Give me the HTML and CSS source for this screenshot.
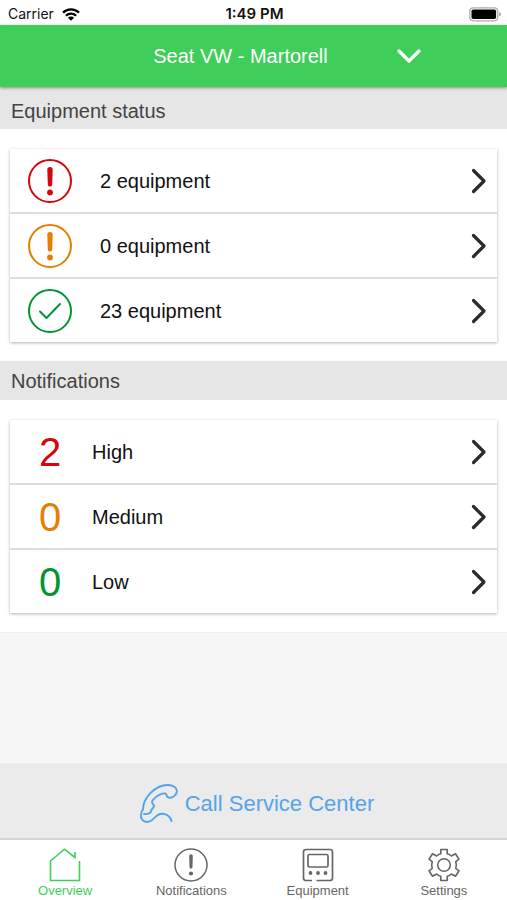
FILE: index.html
```html
<!DOCTYPE html>
<html lang="en">
<head>
<meta charset="utf-8">
<meta name="viewport" content="width=device-width, initial-scale=1">
<title>Overview</title>
<link rel="stylesheet" href="styles.css">
</head>
<body>
<svg class="defs" aria-hidden="true">
  <symbol id="chevron" viewBox="0 0 16 26"><path d="M2.5 2.5 13 13 2.5 23.500" fill="none" stroke="currentColor" stroke-width="3.200" stroke-linecap="round" stroke-linejoin="round"/></symbol>
  <symbol id="alert" viewBox="0 0 44 44"><circle cx="22" cy="22" r="21" fill="none" stroke="currentColor" stroke-width="2"/><path d="M19.300 10.800a2.700 2.700 0 0 1 5.400 0l-.5 14.600a2.200 2.200 0 0 1-4.400 0z" fill="currentColor"/><circle cx="22" cy="33.500" r="2.900" fill="currentColor"/></symbol>
</svg>
<div class="status">
  <span class="carrier">Carrier
    <svg width="18" height="13" viewBox="0 0 18 13" aria-hidden="true"><g fill="none" stroke="#000" stroke-width="2.200"><path d="M1 4.600a11.400 11.400 0 0 1 16 0"/><path d="M3.900 7.800a7.300 7.300 0 0 1 10.200 0"/></g><path d="M9 12.800 5.900 9.700a4.400 4.400 0 0 1 6.200 0z"/></svg>
  </span>
  <span class="clock">1:49 PM</span>
  <svg class="battery" width="32" height="15" viewBox="0 0 32 15" aria-hidden="true"><rect x=".8" y=".8" width="28" height="13" rx="3.500" fill="#fff" stroke="#aaa" stroke-width="1.200"/><rect x="2.500" y="2.500" width="24.600" height="9.600" rx="1.800"/><path d="M30.200 5v4.600q1.600-.8 1.600-2.300T30.200 5" fill="#999"/></svg>
</div>
<header>
  <button class="site" type="button"><span>Seat VW - Martorell</span>
    <svg width="26" height="16" viewBox="0 0 26 16" aria-hidden="true"><path d="m3 3 10 10L23 3" fill="none" stroke="#fff" stroke-width="3.400" stroke-linecap="round" stroke-linejoin="round"/></svg>
  </button>
</header>
<main>
  <section>
    <h2 class="first">Equipment status</h2>
    <div class="card">
      <a class="row" href="#high"><svg class="icon red"><use href="#alert"/></svg><span class="text">2 equipment</span><svg class="chevron"><use href="#chevron"/></svg></a>
      <a class="row" href="#medium"><svg class="icon orange"><use href="#alert"/></svg><span class="text">0 equipment</span><svg class="chevron"><use href="#chevron"/></svg></a>
      <a class="row" href="#ok"><svg class="icon green" viewBox="0 0 44 44"><g fill="none" stroke="currentColor" stroke-width="2" stroke-linecap="round" stroke-linejoin="round"><circle cx="22" cy="22" r="21"/><path d="m12 22.500 6.500 6.500L32 15"/></g></svg><span class="text">23 equipment</span><svg class="chevron"><use href="#chevron"/></svg></a>
    </div>
  </section>
  <section>
    <h2>Notifications</h2>
    <div class="card counts">
      <a class="row" href="#n-high"><span class="count red">2</span><span class="text">High</span><svg class="chevron"><use href="#chevron"/></svg></a>
      <a class="row" href="#n-medium"><span class="count orange">0</span><span class="text">Medium</span><svg class="chevron"><use href="#chevron"/></svg></a>
      <a class="row" href="#n-low"><span class="count green">0</span><span class="text">Low</span><svg class="chevron"><use href="#chevron"/></svg></a>
    </div>
  </section>
</main>
<button class="call" type="button">
  <svg width="40" height="40" viewBox="0 0 40 40" aria-hidden="true"><path d="M32.500 37c-1-5-6-8-11.500-7-5 1-6.500 8-13 8C4 38 1.500 35 2 30.500c.2-3 1-4 2-5C4 14 16 1 29 1c5 0 9 2.500 9 6.500-1 4.500-5 7-8.500 6-2.500-.8-1.500-3-3-4-2-.5-9 1-13 7-1.500 2.500.5 3.500 1.500 5 .8 2-3 3.500-3 5.500.2 2-3 3.500-7 3" fill="none" stroke="currentColor" stroke-width="1.900" stroke-linecap="round" stroke-linejoin="round"/></svg>
  <span>Call Service Center</span>
</button>
<nav>
  <a class="tab active" href="#overview"><svg viewBox="0 0 34 34"><path d="M31.500 13v19.500H2.500V13L16.500 1.200 27 9.500V4" fill="none" stroke="currentColor" stroke-width="1.600"/></svg><span>Overview</span></a>
  <a class="tab" href="#notifications"><svg viewBox="0 0 34 34"><circle cx="17" cy="17" r="16" fill="none" stroke="currentColor" stroke-width="1.500"/><path d="M15.200 8a1.800 1.800 0 0 1 3.600 0l-.3 11a1.500 1.500 0 0 1-3 0z" fill="currentColor"/><circle cx="17" cy="25.500" r="2.100" fill="currentColor"/></svg><span>Notifications</span></a>
  <a class="tab" href="#equipment"><svg viewBox="0 0 34 34"><g fill="none" stroke="currentColor" stroke-width="1.700"><path d="M11 32.500H5q-2.500 0-2.500-2.500V4Q2.500 1.500 5 1.500h24q2.500 0 2.500 2.500v26q0 2.500-2.500 2.500H15.500"/><rect x="7" y="6.500" width="20" height="12.500" rx="1.500"/></g><g fill="currentColor"><circle cx="9.500" cy="25" r="1.900"/><circle cx="17" cy="25" r="1.900"/><circle cx="24.500" cy="25" r="1.900"/></g></svg><span>Equipment</span></a>
  <a class="tab" href="#settings"><svg viewBox="0 0 34 34"><g fill="none" stroke="currentColor" stroke-width="1.600" stroke-linejoin="round"><path d="M13.800 1.500h6.400v4.200q2.500.7 4.200 2.300l4.100-2.200 3.500 5.400-3.200 2.500q1 3.300 0 6.600l3.200 2.500-3.500 5.400-4.100-2.200q-1.700 1.600-4.200 2.300v4.200h-6.400v-4.200q-2.500-.7-4.200-2.300l-4.100 2.200L2 22.800l3.200-2.500q-1-3.300 0-6.600L2 11.200l3.500-5.400L9.600 8q1.700-1.600 4.200-2.300z"/><circle cx="17" cy="17" r="6.300"/></g></svg><span>Settings</span></a>
</nav>
</body>
</html>
```
FILE: styles.css
```css
* { box-sizing: border-box; }
body {
  margin: 0;
  min-height: 100vh;
  display: flex;
  flex-direction: column;
  background: #f6f6f6;
  color: #111;
  font-family: "Liberation Sans", Arial, sans-serif;
  font-size: 20px;
  line-height: 24px;
}
a { color: inherit; text-decoration: none; }
button { border: 0; margin: 0; font: inherit; cursor: pointer; }
svg { display: block; flex: none; }
.defs { position: absolute; width: 0; height: 0; }
.red { color: #d4070e; }
.orange { color: #e47f00; }
.green { color: #009530; }

.status {
  display: grid;
  grid-template-columns: 1fr auto 1fr;
  align-items: center;
  height: 25px;
  padding: 2px 6px 0 8px;
  background: #fff;
  font-family: Inter, sans-serif;
  font-size: 14px;
}
.carrier { display: flex; align-items: center; gap: 8px; }
.clock { font-size: 15px; font-weight: 600; }
.battery { justify-self: end; }

header {
  position: relative;
  background: #3fce59;
  box-shadow: 0 1px 3px rgba(0, 0, 0, .4);
}
.site {
  display: grid;
  grid-template-columns: 1fr auto 1fr;
  align-items: center;
  width: 100%;
  height: 62px;
  padding: 0 26px 0 0;
  background: none;
  color: #fff;
}
.site span { grid-column: 2; }
.site svg { margin-left: 68px; }

main { padding-bottom: 19px; background: #fff; border-bottom: 1px solid #eee; }
h2 {
  margin: 0;
  padding: 8px 11px 7px;
  background: #e6e6e6;
  color: #444;
  font-size: 20px;
  font-weight: 400;
}
h2.first { padding: 12px 11px 6px; }
.card {
  margin: 20px 10px 19px;
  background: #fff;
  box-shadow: 0 1px 3px rgba(0, 0, 0, .3);
}
.counts { margin-bottom: 0; }
.row {
  display: flex;
  align-items: center;
  height: 65px;
  padding: 0 10px 0 18px;
  border-bottom: 2px solid #ddd;
}
.row:last-child { height: 63px; border-bottom: 0; }
.icon { width: 44px; height: 44px; }
.text { flex: 1; margin-left: 28px; }
.count { width: 44px; font-size: 40px; line-height: 44px; text-align: center; }
.counts .text { margin-left: 20px; }
.chevron { width: 16px; height: 26px; color: #2b2b2b; }

.call {
  display: flex;
  align-items: center;
  justify-content: center;
  gap: 6px;
  height: 77px;
  margin-top: auto;
  padding: 6px 0 0 6px;
  background: #ebebeb;
  border-bottom: 2px solid #d6d6d6;
  color: #55a3e8;
  font-size: 22px;
}
nav { display: flex; padding-left: 2px; background: #fff; }
.tab {
  flex: 1;
  display: flex;
  flex-direction: column;
  align-items: center;
  gap: 1px;
  padding: 8px 0 1px;
  color: #666;
  font-size: 13px;
  line-height: 16px;
}
.tab svg { width: 34px; height: 34px; }
.tab.active { color: #3fce59; }
```
